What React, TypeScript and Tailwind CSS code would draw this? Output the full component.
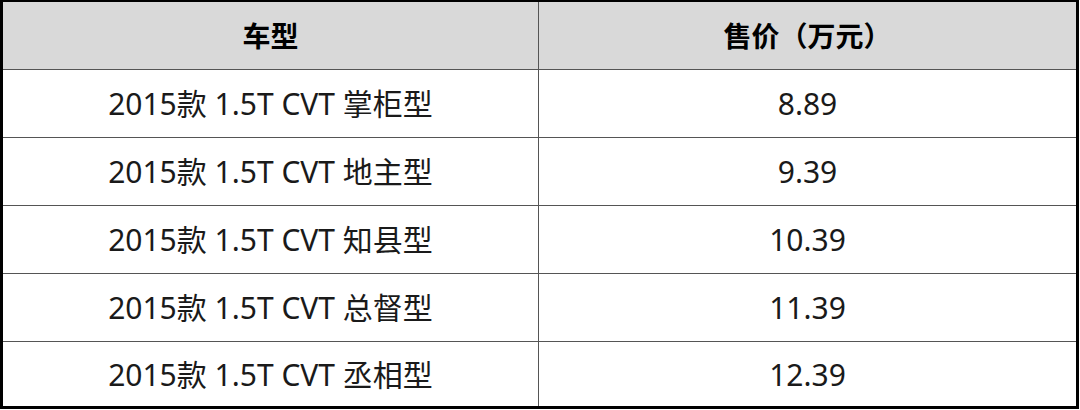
const rows = [
  { model: '2015款 1.5T CVT 掌柜型', price: '8.89' },
  { model: '2015款 1.5T CVT 地主型', price: '9.39' },
  { model: '2015款 1.5T CVT 知县型', price: '10.39' },
  { model: '2015款 1.5T CVT 总督型', price: '11.39' },
  { model: '2015款 1.5T CVT 丞相型', price: '12.39' },
];

export default function App() {
  return (
    <div className="w-[1080px] h-[410px] bg-white font-['Noto_Sans','Noto_Sans_CJK_SC',sans-serif] text-[#1a1a1a]">
      <div className="w-[1079px] border-t-2 border-x-[3px] border-b-[3px] border-black">
        <div className="grid grid-cols-[536px_1fr] h-[68px] bg-[#d9d9d9] border-b border-[#555] text-[28px] font-bold text-black">
          <div className="flex items-center justify-center border-r border-[#555]">车型</div>
          <div className="flex items-center justify-center">售价（万元）</div>
        </div>
        {rows.map((r, i) => (
          <div
            key={r.model}
            className={
              i < rows.length - 1
                ? 'grid grid-cols-[536px_1fr] h-[68px] border-b border-[#555] text-[30px]'
                : 'grid grid-cols-[536px_1fr] h-[64px] text-[30px]'
            }
          >
            <div className="flex items-center justify-center border-r border-[#555]">{r.model}</div>
            <div className="flex items-center justify-center">{r.price}</div>
          </div>
        ))}
      </div>
    </div>
  );
}
